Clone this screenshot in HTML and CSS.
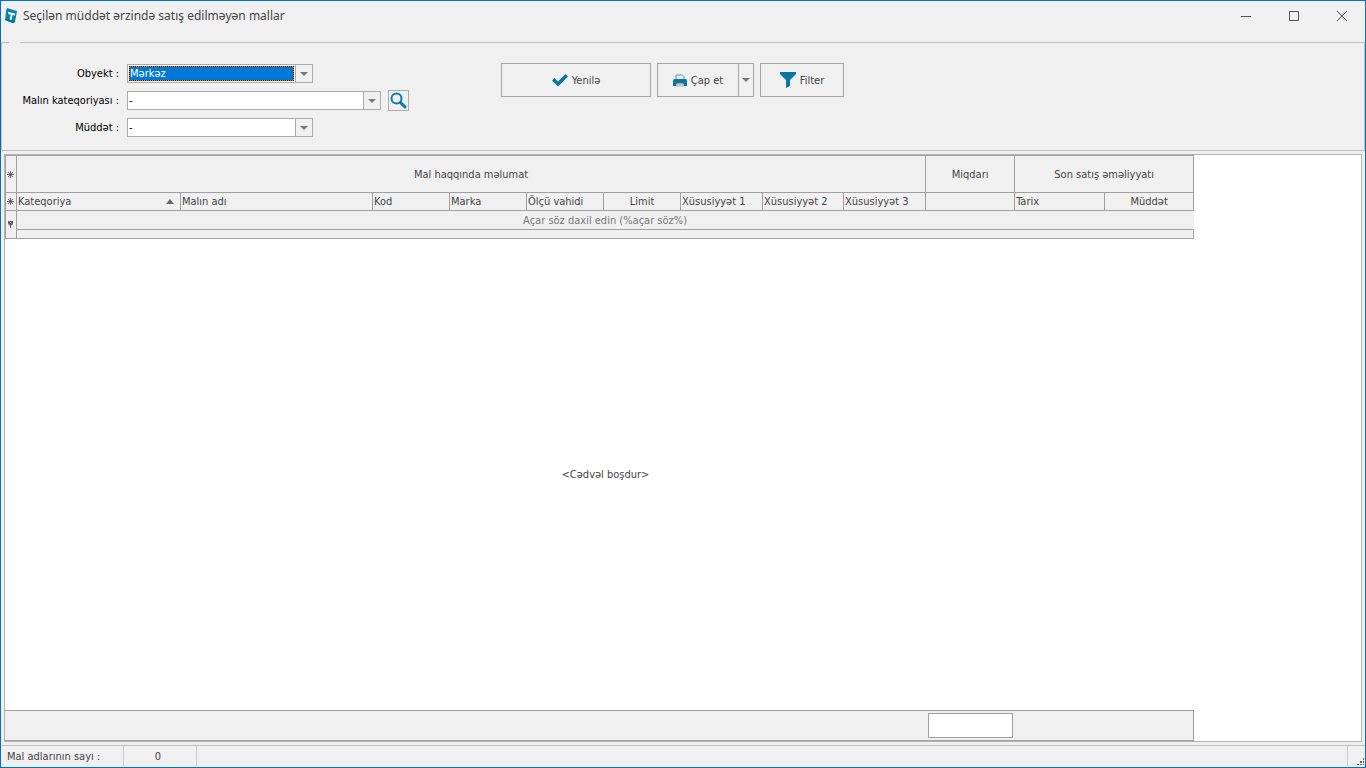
FILE: index.html
```
<!DOCTYPE html>
<html lang="az">
<head>
    <meta charset="UTF-8">
    <meta name="viewport" content="width=device-width, initial-scale=1.0">
    <title>Seçilən müddət ərzində satış edilməyən mallar</title>
    <link rel="stylesheet" href="styles.css">
</head>
<body>
    <div class="window">
        <header class="titlebar">
            <svg class="logo" width="14" height="18" viewBox="0 0 14 18">
                <path d="M2 1 L12 4 L10 15 L8 16 L0 13 L1 4 Z" fill="#0683ae"/>
                <path d="M0 13 L8 16 L10 15 L2 12 Z" fill="#056a90"/>
                <path d="M3 5 L10 6.500 L10 8.500 L7.500 8 L6.500 13 L4.700 12.500 L5.700 7.500 L3 7 Z" fill="#fff"/>
            </svg>
            <h1>Seçilən müddət ərzində satış edilməyən mallar</h1>
            <div class="window-buttons">
                <button type="button" aria-label="Minimize"><svg width="10" height="10" viewBox="0 0 10 10"><path d="M0 5.500H10"/></svg></button>
                <button type="button" aria-label="Maximize"><svg width="10" height="10" viewBox="0 0 10 10"><path d="M.5 .5H9.500V9.500H.5Z"/></svg></button>
                <button type="button" aria-label="Close"><svg width="10" height="10" viewBox="0 0 10 10"><path d="M0 0L10 10M10 0L0 10"/></svg></button>
            </div>
        </header>

        <fieldset class="filters">
            <legend></legend>
            <div class="filters-row">
                <div class="fields">
                    <label for="object">Obyekt :</label>
                    <div class="combo selected">
                        <select id="object"><option>Mərkəz</option></select>
                        <span class="drop"></span>
                    </div>

                    <label for="category">Malın kateqoriyası :</label>
                    <div class="with-search">
                        <div class="combo wide">
                            <select id="category"><option>-</option></select>
                            <span class="drop"></span>
                        </div>
                        <button type="button" class="search" aria-label="Axtar">
                            <svg width="19" height="19" viewBox="0 0 19 19" fill="none" stroke="#0a7ba8">
                                <circle cx="7.500" cy="7.500" r="5" stroke-width="2"/>
                                <path d="M11.500 11.500L16 16" stroke-width="3" stroke-linecap="round"/>
                            </svg>
                        </button>
                    </div>

                    <label for="period">Müddət :</label>
                    <div class="combo">
                        <select id="period"><option>-</option></select>
                        <span class="drop"></span>
                    </div>
                </div>

                <div class="actions">
                    <button type="button" class="btn refresh">
                        <svg width="16" height="14" viewBox="0 0 16 14"><path d="M0 7.500L2.500 5L6 8.500L13.500 1L16 3.500L6 13.500Z" fill="#0a76a3"/></svg>
                        Yenilə
                    </button>
                    <div class="split">
                        <button type="button" class="btn print">
                            <svg width="14" height="13" viewBox="0 0 14 13">
                                <path d="M3 5V1H9.500L11 2.500V5" fill="#efefef" stroke="#4b9abb"/>
                                <path d="M0 6.500Q0 5 1.500 5H12.500Q14 5 14 6.500V12H0Z" fill="#0a76a3"/>
                                <path d="M3 12.500V9.500H11V12.500Z" fill="#8fc0d5"/>
                                <path d="M4.500 9.500H9.500V12H4.500Z" fill="#f9bd8c"/>
                            </svg>
                            Çap et
                        </button>
                        <button type="button" class="btn print-menu" aria-label="Çap seçimləri"><span class="arrow"></span></button>
                    </div>
                    <button type="button" class="btn filter">
                        <svg width="16" height="16" viewBox="0 0 16 16"><path d="M0 0H16V2L10 8V14L6 16V8L0 2Z" fill="#0a76a3"/></svg>
                        Filter
                    </button>
                </div>
            </div>
        </fieldset>

        <main class="grid">
            <table class="grid-head">
                <colgroup>
                    <col class="c-mark"><col class="c-category"><col class="c-name">
                    <col class="c-small"><col class="c-small"><col class="c-small"><col class="c-small">
                    <col class="c-prop"><col class="c-prop-mid"><col class="c-prop">
                    <col class="c-amount"><col class="c-date"><col class="c-amount">
                </colgroup>
                <thead>
                    <tr class="bands">
                        <th class="mark"><svg width="7" height="7" viewBox="0 0 7 7"><path d="M3.500 0V7M0 3.500H7M1 1L6 6M6 1L1 6"/></svg></th>
                        <th colspan="9">Mal haqqında məlumat</th>
                        <th>Miqdarı</th>
                        <th colspan="2">Son satış əməliyyatı</th>
                    </tr>
                    <tr class="columns">
                        <th class="mark"><svg width="7" height="7" viewBox="0 0 7 7"><path d="M3.500 0V7M0 3.500H7M1 1L6 6M6 1L1 6"/></svg></th>
                        <th><div class="sorted">Kateqoriya <span class="sort-up"></span></div></th>
                        <th>Malın adı</th>
                        <th>Kod</th>
                        <th>Marka</th>
                        <th>Ölçü vahidi</th>
                        <th class="center">Limit</th>
                        <th>Xüsusiyyət 1</th>
                        <th>Xüsusiyyət 2</th>
                        <th>Xüsusiyyət 3</th>
                        <th></th>
                        <th>Tarix</th>
                        <th class="center">Müddət</th>
                    </tr>
                </thead>
                <tbody>
                    <tr class="search-row">
                        <td class="mark" rowspan="2"><svg width="7" height="7" viewBox="0 0 7 7"><path d="M3.500 4V7"/><path d="M1 0H6V3L4.500 4.500H2.500L1 3Z" fill="#666" stroke="none"/><path d="M3 1H4V2H3Z" fill="#f0f0f0" stroke="none"/></svg></td>
                        <td colspan="12"><input type="text" aria-label="Axtarış" placeholder="Açar söz daxil edin (%açar söz%)"></td>
                    </tr>
                    <tr class="spacer-row"><td colspan="12"></td></tr>
                </tbody>
            </table>
            <div class="empty">&lt;Cədvəl boşdur&gt;</div>
            <div class="summary"><output class="total" aria-label="Miqdarı"></output></div>
        </main>

        <footer class="statusbar">
            <span class="count-label">Mal adlarının sayı :</span>
            <span class="count">0</span>
            <span class="rest"></span>
            <svg class="grip" width="8" height="8" viewBox="0 0 8 8" fill="#666">
                <path d="M6 0H7V2H6ZM3 3H5V5H3ZM6 3H7V5H6ZM0 6H2V7H0ZM3 6H5V7H3ZM6 6H7V7H6Z"/>
            </svg>
        </footer>
    </div>
</body>
</html>
```
FILE: styles.css
```
* {
    box-sizing: border-box;
}

body {
    margin: 0;
    font-family: "DejaVu Sans Condensed", "Noto Sans", sans-serif;
    font-size: 11px;
    line-height: 17px;
    color: #444;
}

button, select, input {
    font: inherit;
    color: inherit;
    margin: 0;
    padding: 0;
}

.window {
    display: flex;
    flex-direction: column;
    height: 100vh;
    border: 1px solid #0072c6;
    background: #f0f0f0;
}

/* title bar */
.titlebar {
    display: flex;
    align-items: center;
    height: 29px;
    margin-bottom: 12px;
    padding-left: 4px;
}

h1 {
    flex: 1;
    margin: 0 0 0 4px;
    font-family: "Noto Sans", sans-serif;
    font-size: 12px;
    font-weight: normal;
}

.window-buttons {
    display: flex;
    margin-right: -1px;
}

.window-buttons button {
    width: 48px;
    height: 28px;
    border: 0;
    background: none;
}

.window-buttons svg {
    display: block;
    margin: 0 auto;
    fill: none;
    stroke: #555;
}

/* filters */
.filters {
    min-width: 0;
    height: 109px;
    margin: 0;
    padding: 0;
    border: 1px solid #bfbfbf;
}

legend {
    width: 11px;
    height: 1px;
    margin-left: 7px;
    padding: 0;
}

.filters-row {
    display: flex;
    align-items: flex-start;
    gap: 92px;
    padding-top: 20px;
}

.fields {
    display: grid;
    grid-template-columns: 117px auto;
    align-items: center;
    gap: 8px;
    padding-top: 1px;
    color: #000;
}

.fields label {
    text-align: right;
}

.combo {
    display: flex;
    width: 186px;
    height: 19px;
    border: 1px solid #ababab;
    background: #fff;
}

.combo.wide {
    width: 254px;
}

.combo select {
    flex: 1;
    min-width: 0;
    padding-left: 1px;
    border: 0;
    border-radius: 0;
    background: none;
    appearance: none;
    line-height: 15px;
}

.combo.selected select {
    margin: 1px;
    padding: 0;
    border: 1px dotted #000;
    background: linear-gradient(#0078d7, #0078d7) padding-box, #ff8728 border-box;
    color: #fff;
    line-height: 13px;
}

.drop {
    display: flex;
    align-items: center;
    justify-content: center;
    width: 17px;
    border-left: 1px solid #ababab;
    background: #f0f0f0;
}

.drop::before, .arrow {
    content: "";
    border: 4px solid transparent;
    border-top-color: #777;
    border-bottom: 0;
}

.with-search {
    display: flex;
    align-items: center;
    gap: 7px;
    height: 19px;
}

.search {
    display: flex;
    width: 21px;
    height: 21px;
    border: 1px solid #ababab;
    background: none;
}

.actions {
    display: flex;
    gap: 6px;
}

.btn {
    display: flex;
    align-items: center;
    justify-content: center;
    gap: 4px;
    height: 34px;
    border: 1px solid #a6a6a6;
    background: #f0f0f0;
}

.refresh {
    width: 150px;
}

.print {
    width: 82px;
}

.filter {
    width: 84px;
}

.split {
    display: flex;
}

.print-menu {
    width: 15px;
    border-left: 0;
}

/* grid */
.grid {
    flex: 1;
    display: flex;
    flex-direction: column;
    margin: 3px;
    border: 1px solid #b4b4b4;
    background: #fff;
}

.grid-head {
    width: 1189px;
    table-layout: fixed;
    border-spacing: 0;
    border-top: 1px solid #a0a0a0;
    border-left: 1px solid #a0a0a0;
    background: #f0f0f0;
}

.c-mark {
    width: 11px;
}

.c-category {
    width: 164px;
}

.c-name {
    width: 192px;
}

.c-small {
    width: 77px;
}

.c-prop {
    width: 82px;
}

.c-prop-mid {
    width: 81px;
}

.c-amount {
    width: 89px;
}

.c-date {
    width: 90px;
}

.grid-head th, .grid-head td {
    padding: 0 1px;
    border-right: 1px solid #a0a0a0;
    border-bottom: 1px solid #a0a0a0;
    font-weight: normal;
    text-align: left;
    white-space: nowrap;
}

.bands th {
    height: 37px;
}

.columns th {
    height: 18px;
}

.columns .center, .grid-head .bands th {
    text-align: center;
}

.grid-head .mark {
    padding: 0 0 0 1px;
}

.mark svg {
    display: block;
    fill: none;
    stroke: #666;
}

.sorted {
    display: flex;
    align-items: center;
    justify-content: space-between;
    padding-right: 5px;
}

.sort-up {
    border: 4px solid transparent;
    border-top: 0;
    border-bottom: 5px solid #666;
}

.search-row td {
    height: 19px;
    padding: 0;
}

.search-row td:last-child {
    border-right-color: transparent;
}

.search-row input {
    display: block;
    width: 100%;
    height: 18px;
    border: 0;
    background: none;
    text-align: center;
}

.search-row input::placeholder {
    color: #777;
}

.grid-head .spacer-row td {
    height: 9px;
    padding: 0;
}

.empty {
    flex: 1;
    display: flex;
    align-items: center;
    justify-content: center;
    width: 1189px;
    padding-left: 12px;
}

.summary {
    display: flex;
    justify-content: flex-end;
    width: 1189px;
    padding: 2px 180px 2px 0;
    border: 1px solid #a0a0a0;
    border-left: 0;
    background: #f0f0f0;
}

.total {
    width: 85px;
    height: 25px;
    border: 1px solid #a0a0a0;
    background: #fff;
}

/* status bar */
.statusbar {
    display: flex;
    height: 22px;
    padding-bottom: 1px;
    border-top: 1px solid #bfbfbf;
    line-height: 21px;
}

.count-label {
    width: 123px;
    padding-left: 6px;
    border-right: 1px solid #ccc;
}

.count {
    width: 73px;
    padding-right: 4px;
    border-right: 1px solid #ccc;
    text-align: center;
}

.rest {
    flex: 1;
    border-right: 1px solid #ccc;
}

.grip {
    align-self: flex-end;
    margin-left: 9px;
}
```
